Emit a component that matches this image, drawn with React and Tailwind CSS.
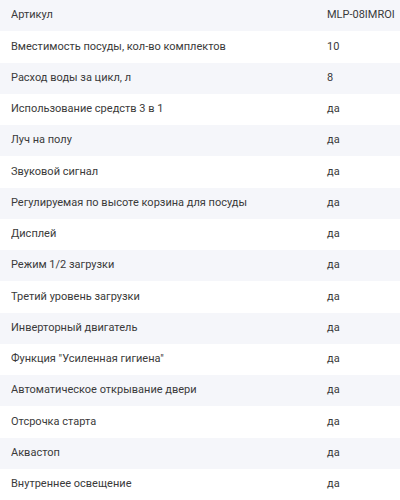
const specs = [
  ['Артикул', 'MLP-08IMROI'],
  ['Вместимость посуды, кол-во комплектов', '10'],
  ['Расход воды за цикл, л', '8'],
  ['Использование средств 3 в 1', 'да'],
  ['Луч на полу', 'да'],
  ['Звуковой сигнал', 'да'],
  ['Регулируемая по высоте корзина для посуды', 'да'],
  ['Дисплей', 'да'],
  ['Режим 1/2 загрузки', 'да'],
  ['Третий уровень загрузки', 'да'],
  ['Инверторный двигатель', 'да'],
  ['Функция "Усиленная гигиена"', 'да'],
  ['Автоматическое открывание двери', 'да'],
  ['Отсрочка старта', 'да'],
  ['Аквастоп', 'да'],
  ['Внутреннее освещение', 'да'],
]

export default function App() {
  return (
    <div className="w-[400px] h-[500px] overflow-hidden bg-white font-['Roboto',sans-serif] text-[11px] text-[#3a3a3a]">
      {specs.map(([name, value], i) => (
        <div
          key={name}
          className={`flex items-center h-[31.25px] pl-[11px] ${i % 2 === 0 ? 'bg-[#f5f6fa]' : 'bg-white'}`}
        >
          <div className="w-[316px] shrink-0 truncate">{name}</div>
          <div className="whitespace-nowrap">{value}</div>
        </div>
      ))}
    </div>
  )
}
